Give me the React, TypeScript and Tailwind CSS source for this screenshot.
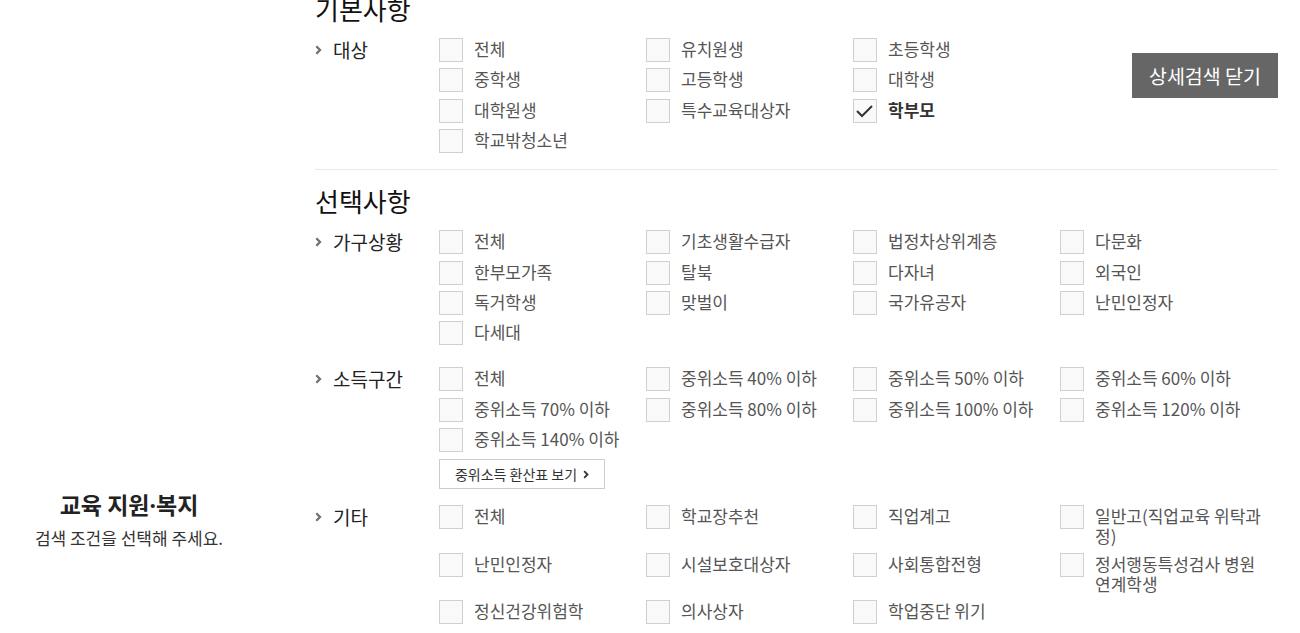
import React from "react"

type Item = { label: string; checked?: boolean }

const basic: Item[] = [
  { label: "전체" },
  { label: "유치원생" },
  { label: "초등학생" },
  { label: "중학생" },
  { label: "고등학생" },
  { label: "대학생" },
  { label: "대학원생" },
  { label: "특수교육대상자" },
  { label: "학부모", checked: true },
  { label: "학교밖청소년" },
]

const household = [
  "전체", "기초생활수급자", "법정차상위계층", "다문화",
  "한부모가족", "탈북", "다자녀", "외국인",
  "독거학생", "맞벌이", "국가유공자", "난민인정자",
  "다세대",
]

const income = [
  "전체", "중위소득 40% 이하", "중위소득 50% 이하", "중위소득 60% 이하",
  "중위소득 70% 이하", "중위소득 80% 이하", "중위소득 100% 이하", "중위소득 120% 이하",
  "중위소득 140% 이하",
]

const etc = [
  "전체", "학교장추천", "직업계고", "일반고(직업교육 위탁과\n정)",
  "난민인정자", "시설보호대상자", "사회통합전형", "정서행동특성검사 병원\n연계학생",
  "정신건강위험학", "의사상자", "학업중단 위기",
]

const Chevron = () => (
  <svg width="7" height="10" viewBox="0 0 7 10" className="shrink-0">
    <polyline points="1.3,1.3 5,5 1.3,8.7" fill="none" stroke="#707070" strokeWidth="2.3" />
  </svg>
)

const Check = ({ label, checked }: Item) => (
  <label className="flex items-start gap-[11px] cursor-pointer">
    <span className="w-6 h-6 shrink-0 border border-[#d0d0d0] bg-[#f9f9f9] flex items-center justify-center">
      {checked && (
        <svg width="22" height="22" viewBox="0 0 22 22">
          <polyline points="3,11 8,16 18,6" fill="none" stroke="#333" strokeWidth="2" />
        </svg>
      )}
    </span>
    <span
      className={
        "pt-[1px] text-[17px] leading-[20px] whitespace-pre " +
        (checked ? "font-bold text-[#333]" : "text-[#555]")
      }
    >
      {label}
    </span>
  </label>
)

const GroupLabel = ({ children }: { children: React.ReactNode }) => (
  <div className="w-[124px] shrink-0 flex items-center h-6 gap-[11px]">
    <Chevron />
    <span className="text-[19px] leading-6 text-[#222]">{children}</span>
  </div>
)

const App = () => {
  return (
    <main
      className="flex gap-[57px] w-[1300px] -mt-[10px] bg-white"
      style={{ fontFamily: '"Noto Sans CJK KR", "Noto Sans", sans-serif' }}
    >
      <aside className="w-[258px] shrink-0 pt-[499px] text-center">
        <h1 className="text-[23px] leading-[30px] font-bold text-[#222]">
          교육 지원<span className="font-['Noto_Sans']">·</span>복지
        </h1>
        <p className="mt-[6px] text-[17px] leading-6 text-[#333]">검색 조건을 선택해 주세요.</p>
      </aside>

      <div className="w-[963px] shrink-0">
        <section className="pb-4 border-b border-[#e9e9e9]">
          <h2 className="text-[26px] leading-[38px] text-[#111] mb-[10px]">기본사항</h2>
          <div className="flex">
            <GroupLabel>대상</GroupLabel>
            <div className="grid grid-cols-[repeat(3,207px)] gap-y-[6.4px]">
              {basic.map((it) => (
                <Check key={it.label} {...it} />
              ))}
            </div>
            <button className="ml-auto mt-[15px] self-start w-[146px] h-[45px] bg-[#666] text-white text-[19.5px]">
              상세검색 닫기
            </button>
          </div>
        </section>

        <section className="pt-3">
          <h2 className="text-[26px] leading-[38px] text-[#111] mb-[10px]">선택사항</h2>

          <div className="flex mb-[22px]">
            <GroupLabel>가구상황</GroupLabel>
            <div className="grid grid-cols-[repeat(4,207px)] gap-y-[6.4px]">
              {household.map((l, i) => (
                <Check key={i} label={l} />
              ))}
            </div>
          </div>

          <div className="flex mb-4">
            <GroupLabel>소득구간</GroupLabel>
            <div>
              <div className="grid grid-cols-[repeat(4,207px)] gap-y-[6.4px]">
                {income.map((l, i) => (
                  <Check key={i} label={l} />
                ))}
              </div>
              <button className="mt-[7px] w-[166px] h-[30px] border border-[#ccc] bg-white flex items-center justify-center gap-[6px] text-[14px] text-[#333]">
                중위소득 환산표 보기
                <svg width="6" height="9" viewBox="0 0 6 9">
                  <polyline points="1.2,1.2 4.5,4.5 1.2,7.8" fill="none" stroke="#333" strokeWidth="1.8" />
                </svg>
              </button>
            </div>
          </div>

          <div className="flex">
            <GroupLabel>기타</GroupLabel>
            <div className="grid grid-cols-[repeat(4,207px)] gap-y-[6.4px]">
              {etc.map((l, i) => (
                <Check key={i} label={l} />
              ))}
            </div>
          </div>
        </section>
      </div>
    </main>
  )
}

export default App
